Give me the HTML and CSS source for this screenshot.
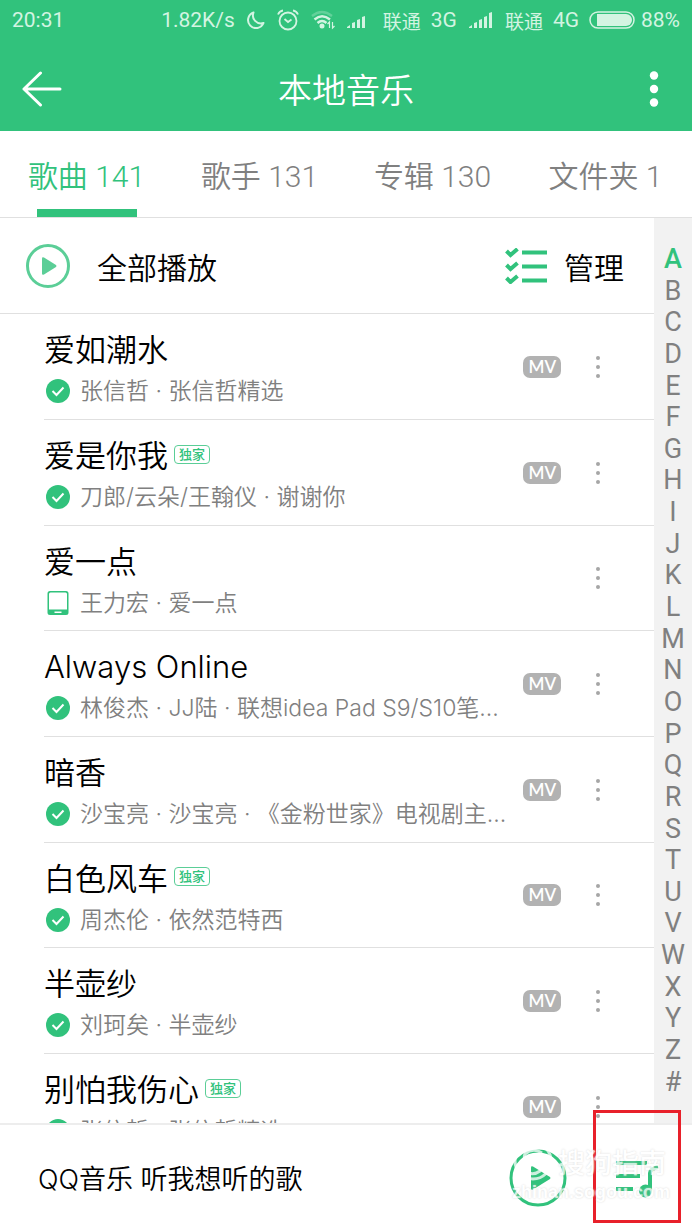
FILE: index.html
```
<!DOCTYPE html>
<html lang="zh-CN">
<head>
  <meta charset="UTF-8">
  <meta name="viewport" content="width=device-width, initial-scale=1.0">
  <title>本地音乐</title>
  <link rel="stylesheet" href="styles.css">
</head>
<body>
  <!-- 图标 -->
  <svg class="sprite" aria-hidden="true">
    <symbol id="i-done" viewBox="0 0 24 24">
      <circle cx="12" cy="12" r="12" fill="#31c27c"/>
      <path d="M6.500 12l4 4 7-7.500" fill="none" stroke="#fff" stroke-width="2"/>
    </symbol>
    <symbol id="i-phone" viewBox="0 0 24 24">
      <path fill="#31c27c" fill-rule="evenodd" d="M4 0h16a2.500 2.500 0 0 1 2.500 2.500v19A2.500 2.500 0 0 1 20 24H4a2.500 2.500 0 0 1-2.500-2.500v-19A2.500 2.500 0 0 1 4 0zM3 3v15.500h18V3a1.500 1.500 0 0 0-1.500-1.500h-15A1.500 1.500 0 0 0 3 3zM8.500 20.500v1.500h7v-1.500z"/>
    </symbol>
    <symbol id="i-dots" viewBox="0 0 6 24">
      <g fill="#a6a6a6"><circle cx="3" cy="3" r="2"/><circle cx="3" cy="12" r="2"/><circle cx="3" cy="21" r="2"/></g>
    </symbol>
    <symbol id="i-signal" viewBox="0 0 24 16">
      <path d="M0 16v-1l3-2v3zM5 16v-5l3-1v6zM10 16V8l3-1v9zM15 16V5l3-1v12z"/>
    </symbol>
  </svg>

  <div class="status">
    <span>20:31</span>
    <span class="speed">1.82K/s</span>
    <svg class="moon" width="18" height="18" viewBox="0 0 18 18"><path d="M6.500 1.500A8 8 0 1 0 16.500 12 8 8 0 0 1 6.500 1.500z" fill="none" stroke="currentColor" stroke-width="2" stroke-linejoin="round"/></svg>
    <svg class="alarm" width="22" height="22" viewBox="0 0 22 22"><g fill="none" stroke="currentColor" stroke-width="1.800"><circle cx="11" cy="12" r="8.500"/><path d="M7.500 10l3.500 3 3.500-2.500M1 5.500Q2.500 2 6 1.500M21 5.500Q19.500 2 16 1.500"/></g></svg>
    <svg class="wifi" width="24" height="20" viewBox="0 0 24 20"><g fill="none" stroke="currentColor" stroke-width="2.400"><path d="M1 6Q11-2 21 6" opacity=".3"/><path d="M3.500 9.500Q11 3 19 9.500M6.500 13Q11 9 15.500 13"/></g><circle cx="11" cy="16" r="2.500" fill="currentColor"/><path d="M18.500 18v-6l-2 2M21.500 12v6l2-2" fill="none" stroke="currentColor" stroke-width="1.200"/></svg>
    <svg class="signal" width="24" height="16"><use href="#i-signal"/></svg>
    <span class="carrier">联通</span>
    <span class="net">3G</span>
    <svg class="signal" width="24" height="16" viewBox="0 0 24 16"><path d="M0 16v-1l3-2v3zM5 16v-5l3-1v6zM10 16V8l3-1v9zM15 16V5l3-1v12zM20 16V1l3-1v16z"/></svg>
    <span class="carrier">联通</span>
    <span class="net">4G</span>
    <svg class="battery" width="46" height="18" viewBox="0 0 46 18"><rect x="1" y="1" width="44" height="16" rx="8" fill="none" stroke="currentColor" stroke-width="1.500"/><path d="M8 3h29a6 6 0 0 1 0 12H8z" fill="currentColor"/></svg>
    <span>88%</span>
  </div>

  <header class="header">
    <button class="icon-btn" aria-label="返回">
      <svg width="40" height="36" viewBox="0 0 40 36"><path d="M18.500 2L2 18l16.500 16M2 18h36" fill="none" stroke="#fff" stroke-width="3" stroke-linecap="round" stroke-linejoin="round"/></svg>
    </button>
    <h1>本地音乐</h1>
    <button class="icon-btn" aria-label="更多">
      <svg width="10" height="36" viewBox="0 0 10 36"><g fill="#fff"><circle cx="5" cy="4.500" r="4.200"/><circle cx="5" cy="18" r="4.200"/><circle cx="5" cy="31.500" r="4.200"/></g></svg>
    </button>
  </header>

  <nav class="tabs">
    <button class="tab active">歌曲 141</button>
    <button class="tab">歌手 131</button>
    <button class="tab">专辑 130</button>
    <button class="tab">文件夹 1</button>
  </nav>

  <main class="main">
    <div class="content">
      <div class="toolbar">
        <button class="play-all">
          <svg width="44" height="44" viewBox="0 0 44 44"><circle cx="22" cy="22" r="20.500" fill="none" stroke="#5bce97" stroke-width="3"/><path d="M16 14.500v15q0 2 2 1l12-7.500q1-1 0-2L18 13.500q-2-1-2 1z" fill="#5bce97"/></svg>
          全部播放
        </button>
        <button class="manage">
          <svg width="42" height="36" viewBox="0 0 42 36"><g fill="none" stroke="#31c27c" stroke-width="4"><path d="M1.500 3l4 4 7-6M1.500 17l4 4 7-6M1.500 30l4 4 7-6"/><path d="M17 4.500h25M17 18.500h25M17 32.500h25"/></g></svg>
          管理
        </button>
      </div>

      <ul class="songs">
        <li class="song">
          <div class="info">
            <h2>爱如潮水</h2>
            <p><svg width="24" height="24"><use href="#i-done"/></svg><span>张信哲 · 张信哲精选</span></p>
          </div>
          <button class="mv">MV</button>
          <button class="more" aria-label="更多"><svg width="6" height="24"><use href="#i-dots"/></svg></button>
        </li>
        <li class="song">
          <div class="info">
            <h2>爱是你我<span class="tag">独家</span></h2>
            <p><svg width="24" height="24"><use href="#i-done"/></svg><span>刀郎/云朵/王翰仪 · 谢谢你</span></p>
          </div>
          <button class="mv">MV</button>
          <button class="more" aria-label="更多"><svg width="6" height="24"><use href="#i-dots"/></svg></button>
        </li>
        <li class="song">
          <div class="info">
            <h2>爱一点</h2>
            <p><svg width="24" height="24"><use href="#i-phone"/></svg><span>王力宏 · 爱一点</span></p>
          </div>
          <button class="more" aria-label="更多"><svg width="6" height="24"><use href="#i-dots"/></svg></button>
        </li>
        <li class="song">
          <div class="info">
            <h2>Always Online</h2>
            <p><svg width="24" height="24"><use href="#i-done"/></svg><span>林俊杰 · JJ陆 · 联想idea Pad S9/S10笔...</span></p>
          </div>
          <button class="mv">MV</button>
          <button class="more" aria-label="更多"><svg width="6" height="24"><use href="#i-dots"/></svg></button>
        </li>
        <li class="song">
          <div class="info">
            <h2>暗香</h2>
            <p><svg width="24" height="24"><use href="#i-done"/></svg><span>沙宝亮 · 沙宝亮 · 《金粉世家》电视剧主...</span></p>
          </div>
          <button class="mv">MV</button>
          <button class="more" aria-label="更多"><svg width="6" height="24"><use href="#i-dots"/></svg></button>
        </li>
        <li class="song">
          <div class="info">
            <h2>白色风车<span class="tag">独家</span></h2>
            <p><svg width="24" height="24"><use href="#i-done"/></svg><span>周杰伦 · 依然范特西</span></p>
          </div>
          <button class="mv">MV</button>
          <button class="more" aria-label="更多"><svg width="6" height="24"><use href="#i-dots"/></svg></button>
        </li>
        <li class="song">
          <div class="info">
            <h2>半壶纱</h2>
            <p><svg width="24" height="24"><use href="#i-done"/></svg><span>刘珂矣 · 半壶纱</span></p>
          </div>
          <button class="mv">MV</button>
          <button class="more" aria-label="更多"><svg width="6" height="24"><use href="#i-dots"/></svg></button>
        </li>
        <li class="song">
          <div class="info">
            <h2>别怕我伤心<span class="tag">独家</span></h2>
            <p><svg width="24" height="24"><use href="#i-done"/></svg><span>张信哲 · 张信哲精选</span></p>
          </div>
          <button class="mv">MV</button>
          <button class="more" aria-label="更多"><svg width="6" height="24"><use href="#i-dots"/></svg></button>
        </li>
      </ul>
    </div>

    <nav class="index" aria-label="字母索引">
      <a href="#A" class="on">A</a>
      <a href="#B">B</a>
      <a href="#C">C</a>
      <a href="#D">D</a>
      <a href="#E">E</a>
      <a href="#F">F</a>
      <a href="#G">G</a>
      <a href="#H">H</a>
      <a href="#I">I</a>
      <a href="#J">J</a>
      <a href="#K">K</a>
      <a href="#L">L</a>
      <a href="#M">M</a>
      <a href="#N">N</a>
      <a href="#O">O</a>
      <a href="#P">P</a>
      <a href="#Q">Q</a>
      <a href="#R">R</a>
      <a href="#S">S</a>
      <a href="#T">T</a>
      <a href="#U">U</a>
      <a href="#V">V</a>
      <a href="#W">W</a>
      <a href="#X">X</a>
      <a href="#Y">Y</a>
      <a href="#Z">Z</a>
      <a href="#other">#</a>
    </nav>
  </main>

  <footer class="player">
    <p>QQ音乐 听我想听的歌</p>
    <button class="icon-btn" aria-label="播放">
      <svg width="58" height="58" viewBox="0 0 58 58"><circle cx="29" cy="29" r="27" fill="none" stroke="#31c27c" stroke-width="3"/><path d="M22 18.500v21q0 2 2 1l17-10.500q1-1 0-2L24 17.500q-2-1-2 1z" fill="#31c27c"/></svg>
    </button>
    <button class="queue" aria-label="播放列表">
      <svg width="44" height="40" viewBox="0 0 44 40"><g fill="none" stroke="#31c27c" stroke-width="4"><path d="M1 5h31M1 18h24M1 31h17"/><path d="M35 33V15q0-4 8-6"/></g><circle cx="30.500" cy="33" r="6.500" fill="#31c27c"/></svg>
    </button>
    <div class="watermark">
      <svg width="42" height="42" viewBox="0 0 42 42"><g fill="none" stroke="#fff" stroke-width="3"><circle cx="21" cy="21" r="18"/><path d="M30 13Q21 7 13 14q-3 6 8 8 11 3 7 9-8 6-17-1"/></g></svg>
      <strong>搜狗指南</strong>
      <small>zhinan.sogou.com</small>
    </div>
  </footer>
</body>
</html>
```
FILE: styles.css
```
* {
  box-sizing: border-box;
}
body {
  margin: 0;
  height: 100vh;
  display: flex;
  flex-direction: column;
  overflow: hidden;
  background: #fff;
  color: #000;
  font-family: Inter, "Noto Sans CJK SC", sans-serif;
  font-weight: 350;
}
h1, h2, p, ul {
  margin: 0;
  padding: 0;
  font-weight: 350;
}
button {
  padding: 0;
  border: none;
  background: none;
  color: inherit;
  font: inherit;
  cursor: pointer;
}
svg {
  display: block;
  flex: none;
}
.sprite {
  position: absolute;
  width: 0;
  height: 0;
}

/* 状态栏 */
.status {
  display: flex;
  align-items: center;
  height: 40px;
  padding: 0 12px;
  background: #31c27c;
  color: #d3f4e2;
  font-family: Roboto, "Noto Sans CJK SC", sans-serif;
  font-size: 21px;
  font-weight: 400;
  white-space: nowrap;
}
.speed {
  margin-left: auto;
}
.moon, .alarm, .wifi, .signal, .carrier {
  margin-left: 12px;
}
.signal {
  fill: currentColor;
}
.carrier {
  font-size: 19px;
}
.net {
  margin-left: 10px;
}
.battery {
  margin: 0 6px 0 10px;
}

/* 标题栏 */
.header {
  display: flex;
  align-items: center;
  justify-content: space-between;
  height: 91px;
  padding: 6px 33px 0 22px;
  background: #31c27c;
  color: #fff;
}
.header .icon-btn {
  display: flex;
  width: 51px;
}
.header .icon-btn:last-child {
  justify-content: flex-end;
  width: 40px;
}
.header h1 {
  font-size: 34px;
}

/* 分类 */
.tabs {
  display: flex;
  height: 87px;
  border-bottom: 1px solid #e0e0e0;
}
.tab {
  position: relative;
  flex: 1;
  color: #808080;
  font-family: Roboto, "Noto Sans CJK SC", sans-serif;
  font-size: 30px;
}
.tab.active {
  color: #31c27c;
}
.tab.active::after {
  content: "";
  position: absolute;
  left: 50%;
  bottom: 0;
  width: 100px;
  height: 8px;
  margin-left: -50px;
  background: #31c27c;
}

.main {
  display: flex;
  flex: 1;
  min-height: 0;
}
.content {
  flex: 1;
  min-width: 0;
  overflow: hidden;
}
.toolbar {
  display: flex;
  align-items: center;
  justify-content: space-between;
  height: 96px;
  padding: 0 30px 0 26px;
  border-bottom: 1px solid #e0e0e0;
}
.play-all, .manage {
  display: flex;
  align-items: center;
  gap: 27px;
  font-size: 30px;
}
.manage {
  gap: 17px;
}

/* 歌曲列表 */
.songs {
  display: grid;
  grid-auto-rows: 106px 106px 105px;
  list-style: none;
}
.song {
  display: flex;
  align-items: center;
  gap: 17px;
  margin-left: 44px;
  padding-right: 36px;
  border-bottom: 1px solid #e0e0e0;
}
.info {
  flex: 1;
  min-width: 0;
  padding-top: 4px;
}
.info h2 {
  display: flex;
  align-items: center;
  gap: 6px;
  margin-bottom: 5px;
  font-size: 31px;
  line-height: 40px;
}
.tag {
  margin-bottom: 4px;
  padding: 0 4px;
  border: 1px solid #5bce97;
  border-radius: 4px;
  color: #31c27c;
  font-size: 13px;
  font-weight: 500;
  line-height: 17px;
}
.info p {
  display: flex;
  align-items: center;
  gap: 10px;
  padding-left: 2px;
  color: #808080;
  font-size: 23px;
  line-height: 32px;
  white-space: nowrap;
}
.mv {
  width: 38px;
  height: 22px;
  border-radius: 7px;
  background: #b2b2b2;
  color: #fff;
  font-family: Lato, sans-serif;
  font-size: 17px;
  font-weight: 600;
  line-height: 22px;
}
.more {
  display: flex;
  justify-content: center;
  width: 40px;
}

/* 字母索引 */
.index {
  display: flex;
  flex-direction: column;
  justify-content: space-between;
  align-items: center;
  width: 38px;
  padding: 27px 0;
  background: #f2f2f2;
}
.index a {
  color: #808080;
  font-family: Roboto, sans-serif;
  font-size: 27px;
  font-weight: 400;
  line-height: 28px;
  text-decoration: none;
}
.index .on {
  color: #31c27c;
  font-weight: 500;
}

/* 播放条 */
.player {
  position: relative;
  display: flex;
  align-items: center;
  height: 107px;
  padding: 0 11px 0 38px;
  border-top: 2px solid #ededed;
  background: #fff;
}
.player p {
  flex: 1;
  font-size: 27px;
}
.queue {
  position: relative;
  display: flex;
  justify-content: center;
  width: 88px;
  margin-left: 26px;
}
/* 红框标注 */
.queue::after {
  content: "";
  position: absolute;
  left: 0;
  right: 0;
  top: -48px;
  bottom: -25px;
  border: 3px solid #e8202a;
}
.watermark {
  position: absolute;
  right: 22px;
  top: 15px;
  display: grid;
  grid-template-columns: 42px auto;
  align-items: center;
  column-gap: 4px;
  color: #fff;
  opacity: 0.75;
  text-shadow: 0 0 2px #ccc;
  pointer-events: none;
}
.watermark strong {
  font-size: 27px;
  font-weight: 500;
}
.watermark small {
  grid-column: 1 / 3;
  font-family: "Liberation Sans", sans-serif;
  font-size: 18px;
  font-weight: 700;
  line-height: 20px;
}
```
